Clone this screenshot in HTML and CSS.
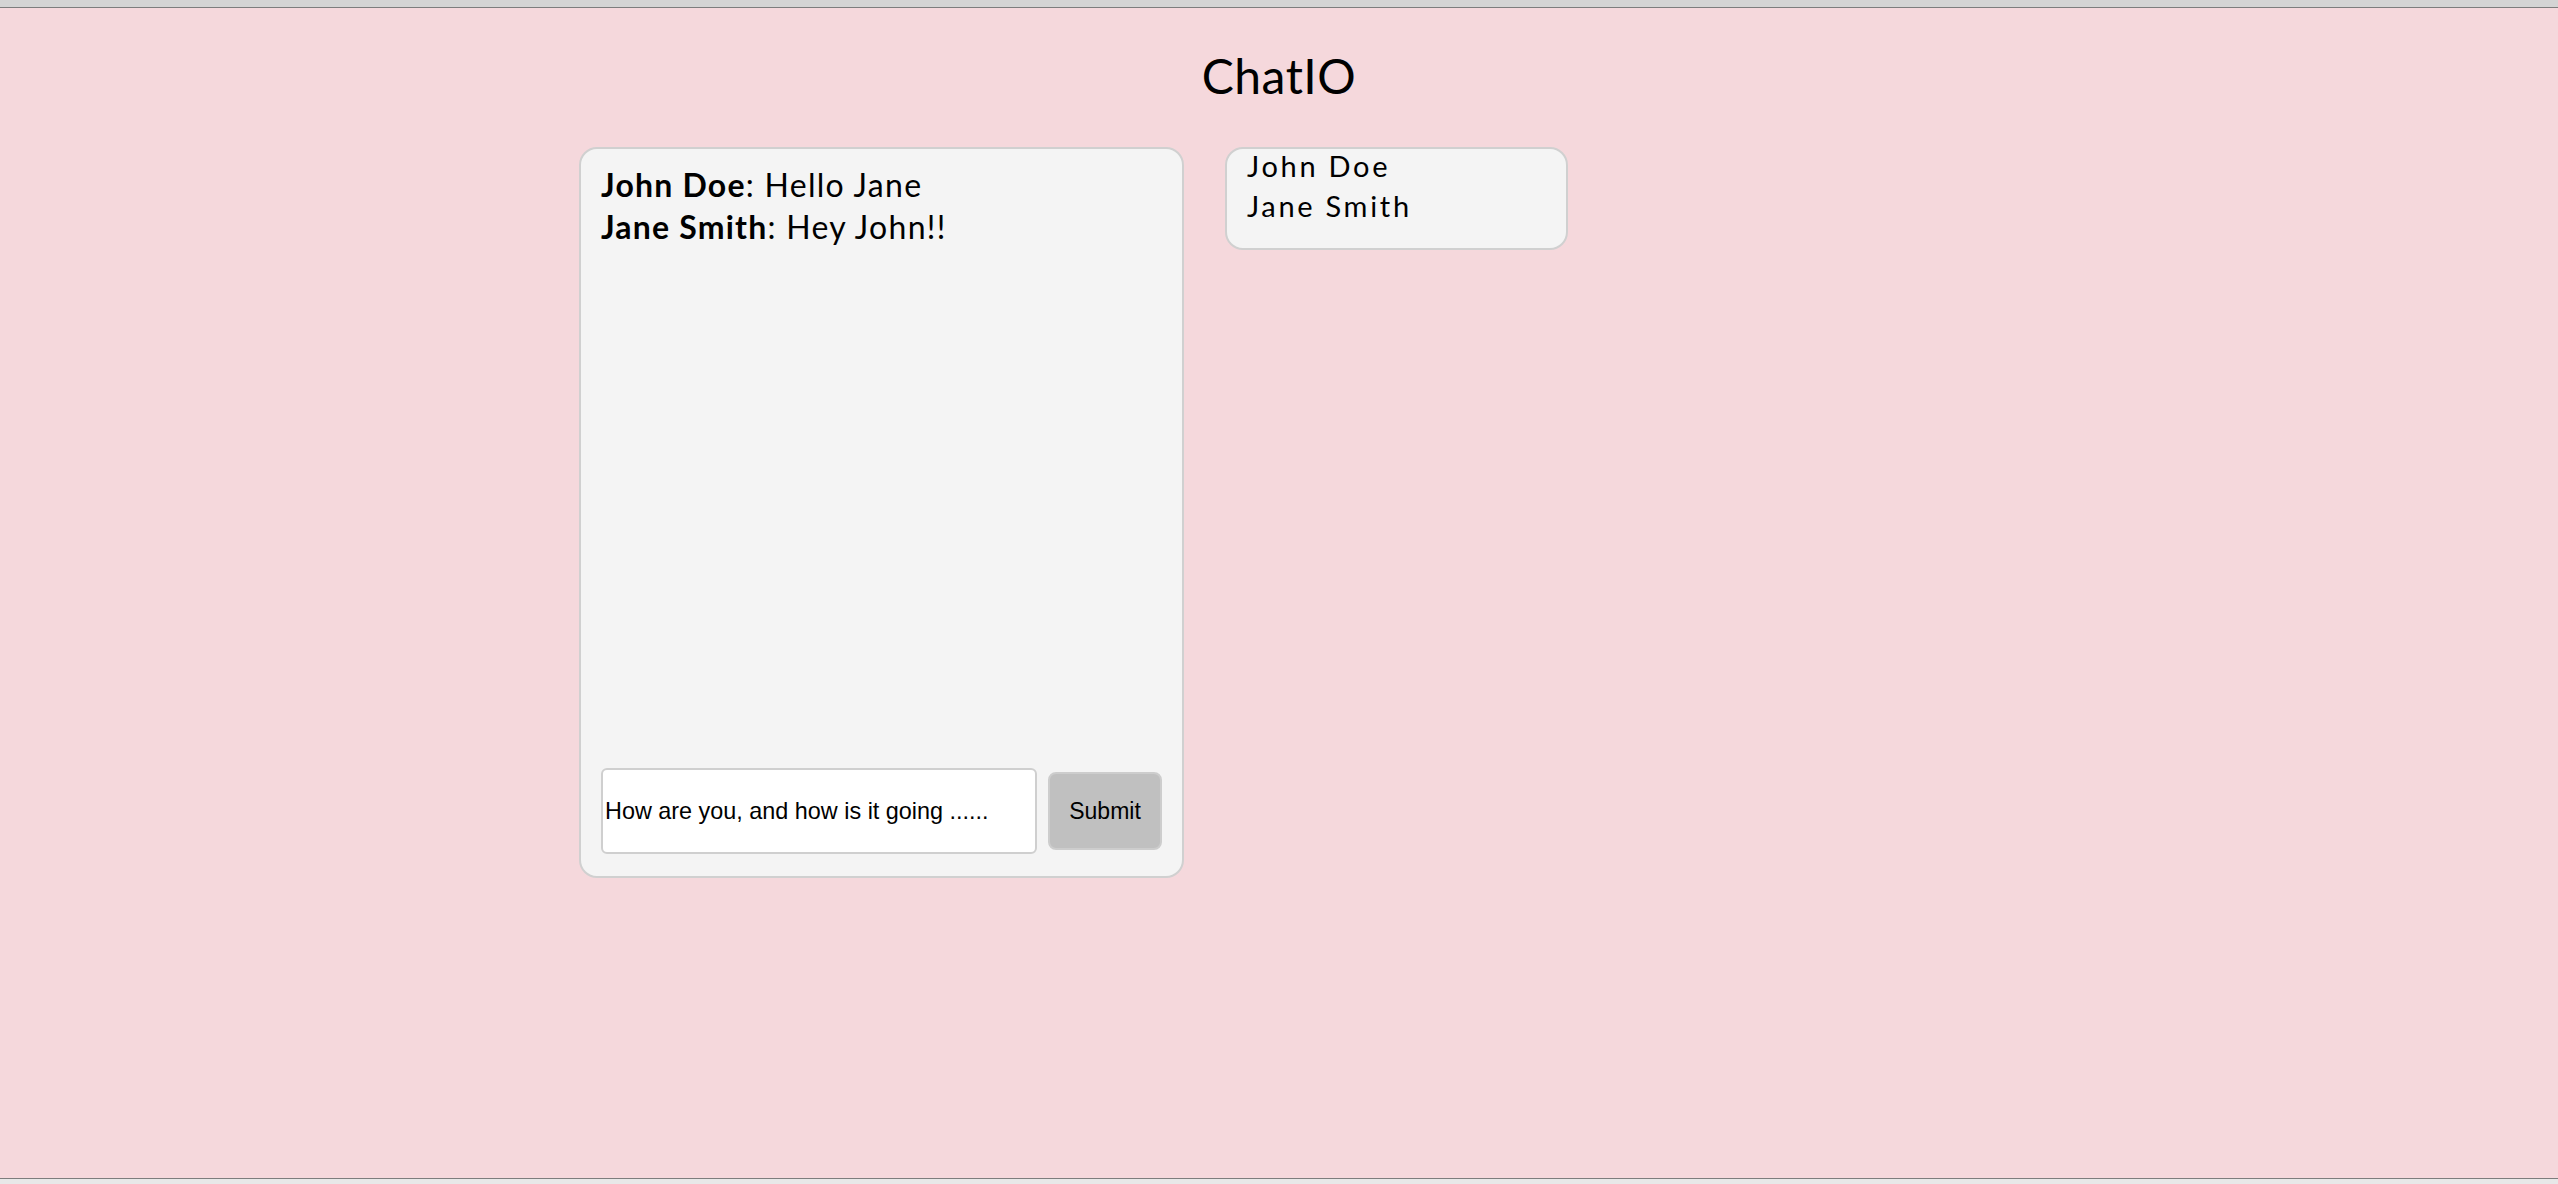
FILE: index.html
```html
<!DOCTYPE html>
<html lang="en">
<head>
<meta charset="utf-8">
<title>ChatIO</title>
<link rel="stylesheet" href="styles.css">
</head>
<body>
<div class="chrome-top"></div>
<main class="page">
  <h1 class="title">ChatIO</h1>
  <div class="container">
    <section class="chat">
      <div class="messages">
        <div class="msg"><b>John Doe</b>: Hello Jane</div>
        <div class="msg"><b>Jane Smith</b>: Hey John!!</div>
      </div>
      <form class="composer">
        <input class="composer-input" type="text" value="How are you, and how is it going ......">
        <button class="composer-btn" type="button">Submit</button>
      </form>
    </section>
    <aside class="users">
      <div class="user">John Doe</div>
      <div class="user">Jane Smith</div>
    </aside>
  </div>
</main>
<div class="chrome-bottom"></div>
</body>
</html>
```
FILE: styles.css
```css
html, body {
  margin: 0;
  padding: 0;
  height: 100%;
}
body {
  display: flex;
  flex-direction: column;
  background: #f5d8dc;
  font-family: "Lato", "Noto Sans", sans-serif;
  color: #000;
}
.chrome-top {
  height: 7px;
  background: #d4d4d4;
  border-bottom: 1px solid #7d7d7d;
  flex: none;
}
.chrome-bottom {
  height: 5px;
  background: #e8e8e8;
  border-top: 1px solid #7d7d7d;
  flex: none;
}
.page {
  flex: 1;
  display: flex;
  flex-direction: column;
  align-items: center;
}
.title {
  margin: 38px 0 0;
  font-size: 48px;
  font-weight: 400;
  line-height: 60px;
  height: 60px;
  letter-spacing: 0.5px;
}
.container {
  width: 1400px;
  margin-top: 41px;
  display: flex;
  align-items: flex-start;
  gap: 41px;
}
.chat {
  width: 601px;
  height: 727px;
  box-sizing: content-box;
  background: #f4f4f4;
  border: 2px solid #d0d0d0;
  border-radius: 18px;
  display: flex;
  flex-direction: column;
}
.messages {
  flex: 1;
  padding: 15px 20px 0;
  font-size: 32px;
  line-height: 42px;
  letter-spacing: 1.3px;
}
.msg b {
  font-weight: 700;
  letter-spacing: 1.2px;
}
.composer {
  display: flex;
  align-items: center;
  gap: 11px;
  padding: 0 20px 22px 20px;
  margin: 0;
}
.composer-input {
  width: 436px;
  height: 86px;
  box-sizing: border-box;
  border: 2px solid #cfcfcf;
  border-radius: 6px;
  background: #fff;
  padding: 0 2px;
  font-family: "Liberation Sans", Arial, sans-serif;
  font-size: 23.4px;
  color: #000;
  outline: none;
}
.composer-btn {
  width: 114px;
  height: 78px;
  box-sizing: border-box;
  border: 2px solid #cdcdcd;
  border-radius: 8px;
  background: #c0c0c0;
  font-family: "Liberation Sans", Arial, sans-serif;
  font-size: 23px;
  color: #000;
  padding: 0;
}
.users {
  height: 99px;
  box-sizing: content-box;
  background: #f4f4f4;
  border: 2px solid #d0d0d0;
  border-radius: 18px;
  padding: 0 0 0 20px;
  width: 319px;
  font-size: 29px;
  line-height: 40px;
  letter-spacing: 2.7px;
}
.user {
  white-space: nowrap;
}
.user:first-child {
  margin-top: -3px;
}
```
